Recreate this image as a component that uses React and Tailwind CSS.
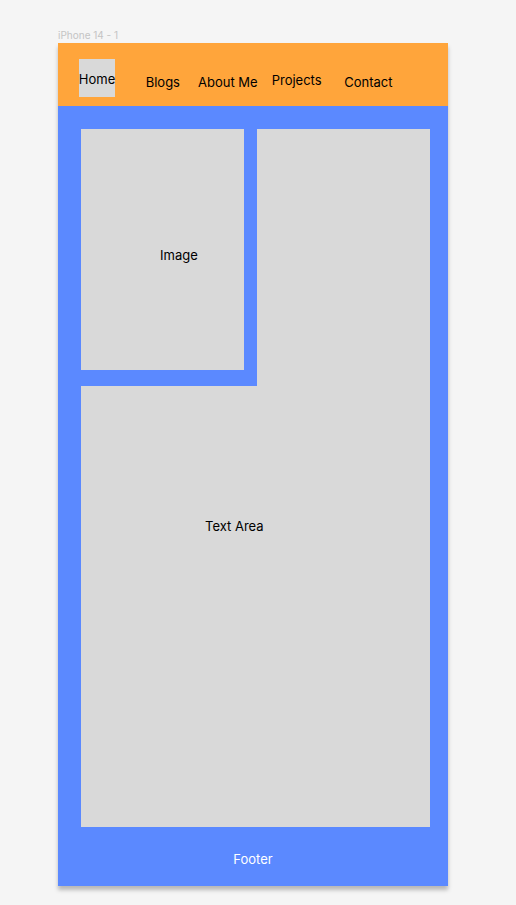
export default function App() {
  const font = { fontFamily: "Inter, 'Noto Sans', sans-serif" };
  return (
    <div className="min-h-[905px] w-[516px] bg-[#f5f5f5] pl-[58px] pt-[28px]" style={font}>
      <div className="text-[10px] leading-[15px] text-[#c4c4c4]">iPhone 14 - 1</div>
      <div className="w-[390px] h-[843px] flex flex-col shadow-[0_4px_4px_rgba(0,0,0,0.25)]">
        <header className="h-[63px] bg-[#ffa53b] flex items-start text-[13px] leading-[16px] text-black">
          <div className="ml-[21px] mt-[16px] w-[36px] h-[38px] bg-[#d9d9d9] flex justify-center pt-[12px] whitespace-nowrap">
            <span>Home</span>
          </div>
          <div className="ml-[30.7px] mt-[31px] w-[52.3px] whitespace-nowrap">Blogs</div>
          <div className="mt-[30.5px] w-[73.7px] whitespace-nowrap">About Me</div>
          <div className="mt-[29px] w-[72.6px] whitespace-nowrap">Projects</div>
          <div className="mt-[30.8px] whitespace-nowrap">Contact</div>
        </header>
        <main className="flex-1 bg-[#5b89ff] flex flex-col">
          <div className="pt-[23px] pl-[23px] pr-[18px]">
            <div className="flex gap-[13px] items-start">
              <div className="w-[163px] h-[241px] bg-[#d9d9d9] text-[13px] leading-[16px] text-black pl-[79px] pt-[117.5px]">
                Image
              </div>
              <div className="flex-1 h-[257px] bg-[#d9d9d9]"></div>
            </div>
            <div className="h-[441px] bg-[#d9d9d9] text-[13px] leading-[16px] text-black pl-[124px] pt-[132px]">
              Text Area
            </div>
          </div>
          <footer className="flex-1 flex justify-center pt-[23.5px] text-[13px] leading-[16px] text-white">
            Footer
          </footer>
        </main>
      </div>
    </div>
  );
}
